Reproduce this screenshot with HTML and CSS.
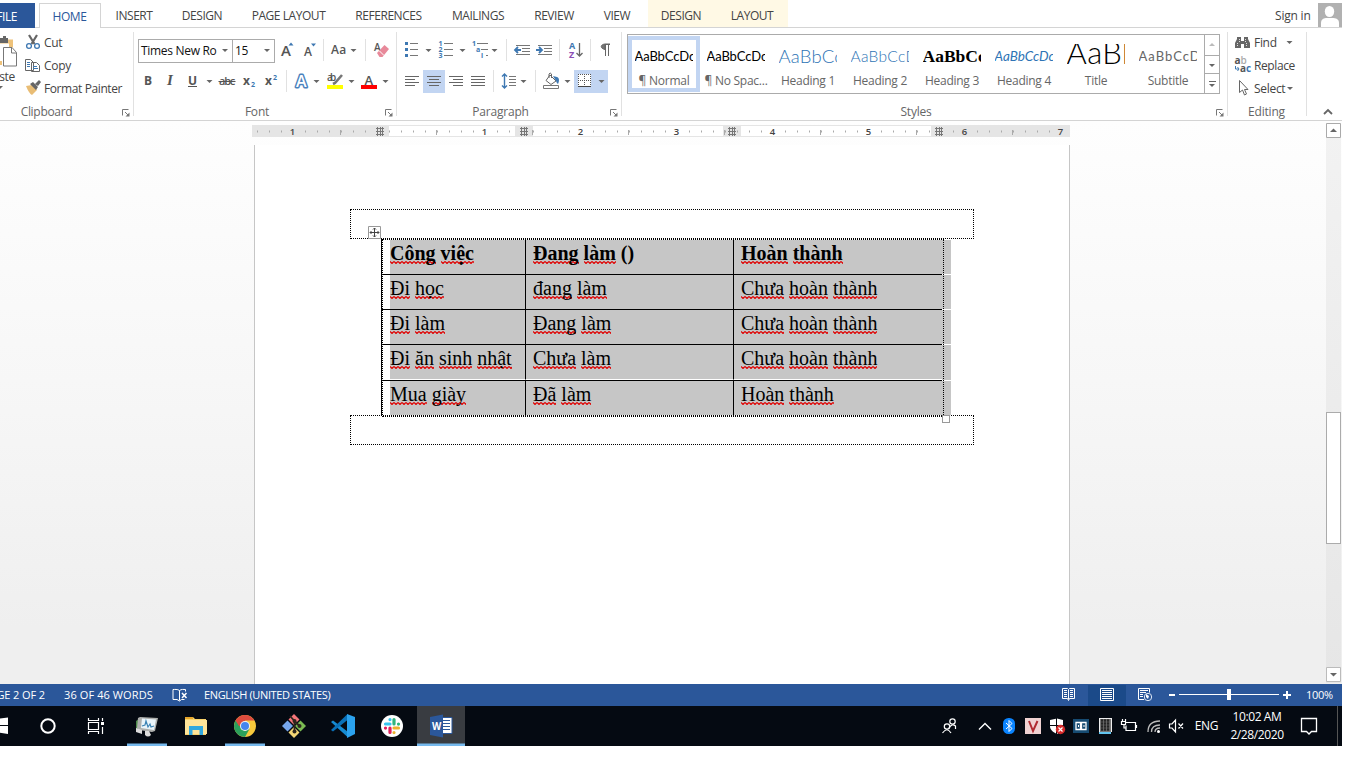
FILE: index.html
```html
<!DOCTYPE html>
<html lang="en">
<head>
<meta charset="utf-8">
<title>Word</title>
<link rel="stylesheet" href="styles.css">
</head>
<body>
<svg class="defs" width="0" height="0">
  <defs>
    <path id="down" d="M0 0h6l-3 3z" fill="#666"/>
    <g id="launch" fill="none" stroke="#777"><path d="M.5 6.5V.5h6M3 3l4 4"/><path d="M7.500 3.500v4h-4z" fill="#777" stroke="none"/></g>
    <g id="hash" stroke="#777"><path d="M0 1.500h8M0 4.500h8M0 7.500h8M1.500 0v9M4.500 0v9M6.500 0v9"/></g>
  </defs>
</svg>
<div class="app">
  <nav class="tabs">
    <span class="tab file">FILE</span>
    <span class="tab home">HOME</span>
    <span class="tab w66">INSERT</span>
    <span class="tab w69">DESIGN</span>
    <span class="tab w104">PAGE LAYOUT</span>
    <span class="tab w96">REFERENCES</span>
    <span class="tab w83">MAILINGS</span>
    <span class="tab w69">REVIEW</span>
    <span class="tab w56">VIEW</span>
    <div class="context"><span class="tab">DESIGN</span><span class="tab">LAYOUT</span></div>
    <span class="signin">Sign in</span>
    <svg class="avatar" width="24" height="24" viewBox="0 0 24 24"><path fill="#b1b1b1" d="M0 0h24v24H0z"/><ellipse cx="11.500" cy="8.500" rx="4.700" ry="5.500" fill="#fff"/><path fill="#fff" d="M3 24v-4c0-4 3-5 6-5h5c4 0 7 1 7 5v4z"/></svg>
  </nav>

  <div class="ribbon">
    <section class="group clipboard">
      <div class="paste">
        <svg width="18" height="34" viewBox="0 34 18 34"><path d="M0 41.500h11v6M0 63h2" fill="none" stroke="#eec27a" stroke-width="4"/><path d="M0 38h3v-2h3v2h2v5H0z" fill="#666"/><path d="M3.500 47.500h8.500l4.500 5v13.500h-13z" fill="#fff" stroke="#777"/><path d="M11.500 47.500v5.500h5" fill="none" stroke="#777"/></svg>
        <span class="paste-label">Paste</span>
        <svg width="18" height="6" viewBox="0 0 18 6"><use href="#down" x="-3" y="1"/></svg>
      </div>
      <div class="cmds">
        <div class="cmd"><svg width="20" height="22" viewBox="24 32 20 22"><path d="M29 35l5.500 9M37 35l-5.500 9" stroke="#666" stroke-width="2.200" fill="none"/><circle cx="29" cy="46" r="2.400" fill="none" stroke="#3e78b2" stroke-width="1.300"/><circle cx="37" cy="46" r="2.400" fill="none" stroke="#3e78b2" stroke-width="1.300"/></svg>Cut</div>
        <div class="cmd"><svg width="20" height="22" viewBox="24 55 20 22"><path d="M25.500 59.500h5l3 3v8h-8zM31.500 62.500h5l3 3v6h-8z" fill="#fff" stroke="#666"/><path d="M27 62.500h3M27 64.500h3M27 66.500h3M33 66.500h4M33 68.500h5" stroke="#3e78b2"/></svg>Copy</div>
        <div class="cmd"><svg width="20" height="22" viewBox="24 78 20 22"><path d="M26 86l6-1 5 5-5 5c-2-1-4-4-6-9z" fill="#e9bd75"/><path d="M30 84l3-2 5 5-2 3zM35 84l4-4 2 2-3 4z" fill="#666"/></svg><span class="tight">Format Painter</span></div>
      </div>
      <div class="label"><span>Clipboard</span><svg width="8" height="8"><use href="#launch"/></svg></div>
    </section>

    <section class="group font">
      <div class="row r1">
        <div class="box">Times New Ro<svg width="6" height="3"><use href="#down"/></svg></div>
        <div class="box">15<svg width="6" height="3"><use href="#down"/></svg></div>
        <svg width="24" height="28" viewBox="275 36 24 28"><text x="281" y="55.500" class="g s15">A</text><path d="M288.500 45.500h5l-2.500-3z" fill="#3e78b2"/></svg>
        <svg width="24" height="28" viewBox="299 36 24 28"><text x="304" y="55.500" class="g s12">A</text><path d="M311 43.500h5l-2.500 3z" fill="#3e78b2"/></svg>
        <i class="sep"></i>
        <svg width="41" height="28" viewBox="324 36 41 28"><text x="331" y="54" class="g s12" textLength="15">Aa</text><use href="#down" x="350.500" y="49"/></svg>
        <i class="sep"></i>
        <svg width="30" height="28" viewBox="366 36 30 28"><text x="374" y="51" class="g s10">A</text><path d="M377 53l7.500-8 4.500 4-6.500 8h-3z" fill="#e8899a"/><path d="M379 50.500l5 5" stroke="#fff"/></svg>
      </div>
      <div class="row r2">
        <svg width="80" height="28" viewBox="137 67 80 28"><text x="144" y="85" class="g b s12">B</text><text x="167" y="85" class="g serif s14">I</text><text x="188" y="84.500" class="g b s12">U</text><path d="M188 86.500h9" stroke="#555"/><use href="#down" x="206.500" y="80"/></svg>
        <svg width="69" height="28" viewBox="217 67 69 28"><text x="219" y="85" class="g s11 semi" textLength="16">abc</text><path d="M218.500 81.500h17" stroke="#555"/><text x="243" y="85" class="g b s12">x</text><text x="251" y="87" class="bl b s7">2</text><text x="265" y="85" class="g b s12">x</text><text x="273" y="80" class="bl b s7">2</text></svg>
        <i class="sep"></i>
        <svg width="34" height="28" viewBox="287 67 34 28"><text x="296" y="86.500" font-size="16" class="outline">A</text><use href="#down" x="313.500" y="80"/></svg>
        <svg width="35" height="28" viewBox="321 67 35 28"><text x="327" y="81" class="g s10 semi" textLength="9">ab</text><path d="M342 75l-7 8-2 1" fill="none" stroke="#777" stroke-width="2.600"/><path d="M327 85h16v4h-16z" fill="#ff0"/><use href="#down" x="348.500" y="80"/></svg>
        <svg width="34" height="28" viewBox="356 67 34 28"><text x="364.500" y="84.500" class="g s13 semi">A</text><path d="M361 85h16v4h-16z" fill="red"/><use href="#down" x="382.500" y="80"/></svg>
      </div>
      <div class="label"><span>Font</span><svg width="8" height="8"><use href="#launch"/></svg></div>
    </section>

    <section class="group para">
      <div class="row r1">
        <svg width="109" height="28" viewBox="397 36 109 28"><path d="M405 42h3v3h-3zM405 48h3v3h-3zM405 54h3v3h-3z" fill="#3e78b2"/><path d="M410 43.500h8M410 49.500h8M410 55.500h8M444 43.500h9M444 49.500h9M444 55.500h9M477 43.500h11M481 49.500h7M486 55.500h2" stroke="#777"/><use href="#down" x="425.500" y="49"/><text x="438.500" y="46" class="bl b s7">1</text><text x="438.500" y="52" class="bl b s7">2</text><text x="438.500" y="58" class="bl b s7">3</text><use href="#down" x="459.500" y="49"/><text x="472" y="46" class="bl b s7">1</text><text x="476" y="52" class="bl b s7">a</text><text x="481" y="58" class="bl b s7">i</text><use href="#down" x="491.500" y="49"/></svg>
        <i class="sep"></i>
        <svg width="52" height="28" viewBox="507 36 52 28"><path d="M516 45.500h14M522 48.500h8M522 51.500h8M516 54.500h14M538 45.500h14M544 48.500h8M544 51.500h8M538 54.500h14" stroke="#777"/><path d="M521 50h-6m3-3l-3 3 3 3M536 50h6m-3-3l3 3-3 3" fill="none" stroke="#3e78b2" stroke-width="1.800"/></svg>
        <i class="sep"></i>
        <svg width="30" height="28" viewBox="560 36 30 28"><text x="569" y="49" class="bl b s9">A</text><text x="569" y="58" class="b s9" fill="#8b4fb5">Z</text><path d="M579.500 43v13m-3-3l3 3 3-3" fill="none" stroke="#666" stroke-width="1.300"/></svg>
        <i class="sep"></i>
        <svg width="29" height="28" viewBox="591 36 29 28"><path d="M610 44.500h-5v5c-5-1-5-5 0-5.500h5M605.500 44v12M608.500 44v12" fill="#777" stroke="#666"/></svg>
      </div>
      <div class="row r2">
        <svg width="96" height="28" viewBox="397 67 96 28"><path d="M423 70h22v23h-22z" fill="#c2d5f2"/><path d="M405 76.500h14M405 79.500h10M405 82.500h14M405 85.500h10M427 76.500h14M429 79.500h10M427 82.500h14M429 85.500h10M449 76.500h14M453 79.500h10M449 82.500h14M453 85.500h10M471 76.500h14M471 79.500h14M471 82.500h14M471 85.500h14" stroke="#666"/></svg>
        <i class="sep"></i>
        <svg width="41" height="28" viewBox="494 67 41 28"><path d="M504.500 74v14m-2.500-11.500l2.500-2.500 2.500 2.500m-5 9l2.500 2.500 2.500-2.500" fill="none" stroke="#3e78b2" stroke-width="1.400"/><path d="M509 76.500h7M509 79.500h7M509 82.500h7M509 85.500h7" stroke="#777"/><use href="#down" x="520.500" y="80"/></svg>
        <i class="sep"></i>
        <svg width="85" height="28" viewBox="536 67 85 28"><path d="M550 75l6 6-5 3.500-5-4zM549 78v-4q1-2 2.500 0v4" fill="#fff" stroke="#666"/><path d="M553 76l4 1c3 1 2 5 1 7q-1 0-2-3z" fill="#3e78b2"/><path d="M543.500 85.500h15v3h-15z" fill="#fff" stroke="#777"/><use href="#down" x="564.500" y="80"/><path d="M574 70h34v23h-34z" fill="#c2d5f2"/><path d="M578 74h13v13h-13z" fill="#fff"/><path d="M578.500 74v12M584.500 74v12M590.500 74v12M578 74.500h13M578 80.500h13" stroke="#555" stroke-dasharray="1 1"/><path d="M578 86.500h13" stroke="#444"/><use href="#down" x="598.500" y="80"/></svg>
      </div>
      <div class="label"><span>Paragraph</span><svg width="8" height="8"><use href="#launch"/></svg></div>
    </section>

    <section class="group styles">
      <div class="gallery">
        <div class="style on"><b class="smp">AaBbCcDc</b><span>¶ Normal</span></div>
        <div class="style"><b class="smp">AaBbCcDc</b><span>¶ No Spac...</span></div>
        <div class="style"><b class="smp h1">AaBbCc</b><span>Heading 1</span></div>
        <div class="style"><b class="smp h2">AaBbCcD</b><span>Heading 2</span></div>
        <div class="style"><b class="smp h3">AaBbCc</b><span>Heading 3</span></div>
        <div class="style"><b class="smp h4">AaBbCcDc</b><span>Heading 4</span></div>
        <div class="style"><b class="smp ti">AaBb</b><span>Title</span></div>
        <div class="style"><b class="smp su">AaBbCcD</b><span>Subtitle</span></div>
        <div class="pager">
          <svg width="14" height="20"><path d="M4 11h6l-3-3z" fill="#bbb"/></svg>
          <svg width="14" height="18"><use href="#down" x="4" y="8"/></svg>
          <svg width="14" height="19"><path d="M4 7.500h7" stroke="#666"/><use href="#down" x="4" y="10"/></svg>
        </div>
      </div>
      <div class="label"><span>Styles</span><svg width="8" height="8"><use href="#launch"/></svg></div>
    </section>

    <section class="group editing">
      <div class="cmds">
        <div class="cmd"><svg width="20" height="22" viewBox="1234 32 20 22"><path d="M1235 48v-5l2-4v-2h4v4h3v-4h4v2l2 4v5h-6v-4h-3v4z" fill="#666"/><path d="M1237.500 43v4M1246.500 43v4M1239.500 39v4M1245.500 39v4" stroke="#ddd" stroke-dasharray="1 1"/></svg>Find<svg width="16" height="3"><use href="#down" x="9.500"/></svg></div>
        <div class="cmd"><svg width="20" height="22" viewBox="1234 55 20 22"><text x="1234.500" y="63.500" class="g b s10">a</text><text x="1240.500" y="63.500" class="s10 semi" fill="#aaa">b</text><text x="1240" y="72" class="g b s10">a</text><text x="1246" y="72" class="bl b s10">c</text><path d="M1235.500 66v3h3m-1-2l1.500 2-1.500 2" fill="none" stroke="#3e78b2"/></svg><span class="tight">Replace</span></div>
        <div class="cmd"><svg width="20" height="22" viewBox="1234 78 20 22"><path d="M1239.500 80.500v12l3-2.500 2 5 2-1-2-4.500h3.500z" fill="#fff" stroke="#666"/></svg>Select<svg width="9" height="3"><use href="#down" x="2"/></svg></div>
      </div>
      <div class="label"><span>Editing</span></div>
    </section>
    <div class="collapse"><svg width="10" height="7"><path d="M1 6l4-4 4 4" fill="none" stroke="#666" stroke-width="1.800"/></svg></div>
  </div>

  <main class="work">
    <div class="sheetcol">
      <svg class="ruler" width="818" height="12" viewBox="252 125 818 12">
        <path d="M252 125h818v12H252z" fill="#e5e5e5"/>
        <path d="M389 126h126v10H389zM533 126h190v10H533zM741 126h190v10H741z" fill="#fff"/>
        <path d="M257 131.500H1058" stroke="#aaa" stroke-width="2" stroke-dasharray="1 11"/>
        <path d="M340.500 130v5M436.500 130v5M532.500 130v5M628.500 130v5M724.500 130v5M820.500 130v5M916.500 130v5M1012.500 130v5" stroke="#aaa"/>
        <path d="M289 126h7v10h-7zM961 126h7v10h-7zM1057 126h7v10h-7z" fill="#e5e5e5"/><path d="M481 126h7v10h-7zM577 126h7v10h-7zM673 126h7v10h-7zM769 126h7v10h-7zM865 126h7v10h-7z" fill="#fff"/>
        <g class="num"><text x="292.500" y="135">1</text><text x="484.500" y="135">1</text><text x="580.500" y="135">2</text><text x="676.500" y="135">3</text><text x="772.500" y="135">4</text><text x="868.500" y="135">5</text><text x="964.500" y="135">6</text><text x="1060.500" y="135">7</text></g>
        <use href="#hash" x="376" y="127"/><use href="#hash" x="520" y="127"/><use href="#hash" x="728" y="127"/><use href="#hash" x="935" y="127"/>
      </svg>
      <article class="page">
        <div class="zone"></div>
        <div class="tablewrap">
          <svg class="move" width="13" height="13"><path d="M.5.5h12v12H.5z" fill="#fff" stroke="#999"/><path d="M6.500 2v9M2 6.500h9M5 3.500l1.500-1.500L8 3.500M5 9.500L6.500 11 8 9.500M3.500 5L2 6.500 3.500 8M9.500 5L11 6.500 9.500 8" fill="none" stroke="#444"/></svg>
          <div class="tr hd"><div><u>Công</u> <u>việc</u></div><div><u>Đang</u> <u>làm</u> ()</div><div><u>Hoàn</u> <u>thành</u></div><i></i></div>
          <div class="tr"><div><u>Đi</u> <u>học</u></div><div><u>đang</u> <u>làm</u></div><div><u>Chưa</u> <u>hoàn</u> <u>thành</u></div><i></i></div>
          <div class="tr"><div><u>Đi</u> <u>làm</u></div><div><u>Đang</u> <u>làm</u></div><div><u>Chưa</u> <u>hoàn</u> <u>thành</u></div><i></i></div>
          <div class="tr tall"><div><u>Đi</u> <u>ăn</u> <u>sinh</u> <u>nhật</u></div><div><u>Chưa</u> <u>làm</u></div><div><u>Chưa</u> <u>hoàn</u> <u>thành</u></div><i></i></div>
          <div class="tr last"><div><u>Mua</u> <u>giày</u></div><div><u>Đã</u> <u>làm</u></div><div><u>Hoàn</u> <u>thành</u></div><i></i></div>
          <span class="handle"></span>
        </div>
        <div class="zone"></div>
      </article>
    </div>
    <div class="scroll">
      <svg width="15" height="15"><path d="M.5.500h14v14H.5z" fill="#fff" stroke="#aaa"/><path d="M4 9h7L7.500 5.500z" fill="#666"/></svg>
      <div class="thumb"></div>
      <svg width="15" height="15"><path d="M.5.500h14v14H.5z" fill="#fff" stroke="#bbb"/><path d="M4 6h7l-3.500 3.500z" fill="#666"/></svg>
    </div>
  </main>

  <footer class="status">
    <span class="pg">PAGE 2 OF 2</span><span class="words">36 OF 46 WORDS</span>
    <svg class="proof" width="16" height="14" viewBox="172 687 16 14"><path d="M179.500 689.500c-2-1.500-5-1-6.500-1v10h4l2.500 1.500 2-1.500h3M179.500 689.500v10M179.500 689.500c2-1.500 4-1 6-1v2" fill="none" stroke="#fff"/><path d="M182 692l4.500 5M186.500 692l-4.500 5" stroke="#fff" stroke-width="1.500"/></svg>
    <span class="lang">ENGLISH (UNITED STATES)</span>
    <svg class="views" width="242" height="22" viewBox="1058 684 242 22"><path d="M1088 685h38v21h-38z" fill="#1b4a89"/><path d="M1062.500 688.500h5l1 1 1-1h5v10h-5l-1 2-1-2h-5zM1068.500 690v9M1064 690.500h3M1064 692.500h3M1064 694.500h3M1064 696.500h3M1070 690.500h3M1070 692.500h3M1070 694.500h3M1070 696.500h3" fill="none" stroke="#fff"/><path d="M1100.500 688.500h13v12h-13zM1102 690.500h10M1102 692.500h10M1102 694.500h10M1102 696.500h10M1102 698.500h10" fill="none" stroke="#fff"/><path d="M1144 699.500h-5.500v-11h11v4M1140 690.500h8M1140 692.500h6M1140 694.500h3M1140 696.500h3" fill="none" stroke="#fff"/><circle cx="1148" cy="697" r="3.700" fill="#2b579a" stroke="#dce6f4"/><path d="M1146 694l3 2-1 3-2-2z" fill="#fff"/><path d="M1169 694h6v2h-6zM1283 694h8v2h-8zM1286 691h2v8h-2zM1227 689h4v11h-4z" fill="#fff"/><path d="M1179 694.500h100" stroke="#fff"/></svg>
    <span class="zoom">100%</span>
  </footer>

  <div class="taskbar">
    <svg width="24" height="40" viewBox="0 706 24 40"><path d="M0 718.500l8-1v7.500H0zM0 726h8v8l-8-1.200z" fill="#fff"/></svg>
    <svg width="48" height="40" viewBox="24 706 48 40"><circle cx="48" cy="726" r="6.700" fill="none" stroke="#fff" stroke-width="2"/></svg>
    <svg width="51" height="40" viewBox="72 706 51 40"><path d="M88.500 718v2.500h10V718M88.500 734v-2.500h10v2.500M88.500 722.500h10v7h-10zM102.500 718v3M102.500 727v7" fill="none" stroke="#fff" stroke-width="1.200"/><path d="M101 722h3v3h-3z" fill="#fff"/></svg>
    <svg width="49" height="40" viewBox="123 706 49 40"><path d="M136 721l3-2v11h-3z" fill="#4d8b4a"/><path d="M138 718l2-1 18 1-3 13-3 1-13-2-2-2z" fill="#aeb0ae"/><path d="M142 718.500l14 1-2 10.500-13-2z" fill="#e9f4fa"/><path d="M142 726l3-1 1-4 2 6 2-3 1 3 3-1" fill="none" stroke="#3a83b5" stroke-width="1.200"/><path d="M136 728l6 2v4l-6-2zM145 731h4l2 4q-3 3-6 0z" fill="#ddd"/><path d="M127 743.500h40v2.500h-40z" fill="#76b9ed"/></svg>
    <svg width="49" height="40" viewBox="172 706 49 40"><path d="M185 717h8l2 2h11v16h-21z" fill="#f9d36b"/><path d="M185 720h22v14h-22z" fill="#ffe59a"/><path d="M185 717h8v2h-8z" fill="#e5a52b"/><path d="M189 726h14v9h-3.500v-5h-7v5H189z" fill="#31a8df"/></svg>
    <svg width="49" height="40" viewBox="221 706 49 40"><circle cx="245" cy="726" r="11" fill="#f7c93c"/><path d="M245 726L235.500 720.500A11 11 0 0 0 245 737l4.500-8z" fill="#2ba05b"/><path d="M235.500 720.500a11 11 0 0 1 19 0H245v5.500h-6z" fill="#dd4b3e"/><circle cx="245" cy="726" r="5" fill="#f4f4f4"/><circle cx="245" cy="726" r="4" fill="#4585ed"/><path d="M225 743.500h40v2.500h-40z" fill="#76b9ed"/></svg>
    <svg width="49" height="40" viewBox="270 706 49 40"><path d="M294 714l5.500 5.500-5.500 5.500-5.500-5.500z" fill="#f4757a"/><path d="M287.500 720.500l5.500 5.500-5.500 5.500-5.500-5.500z" fill="#76a7ed"/><path d="M300.500 720.500l5.500 5.500-5.500 5.500-5.500-5.500z" fill="#7bbb52"/><path d="M294 727l5.500 5.500-5.500 5.500-5.500-5.500z" fill="#f4d675"/><path d="M290 716l4.500 5v11M294.500 721l5 5" fill="none" stroke="#2d261d" stroke-width="1.800"/><circle cx="294.500" cy="721" r="2" fill="#2d261d"/><circle cx="299.500" cy="726" r="2" fill="#2d261d"/><circle cx="294.500" cy="731.500" r="2" fill="#2d261d"/></svg>
    <svg width="49" height="40" viewBox="319 706 49 40"><path d="M331 722l2-1.500 14.500 11V737z" fill="#168bd2"/><path d="M331 730l2 1.500L347.500 720v-6z" fill="#0a71b8"/><path d="M347 714l8 3v17l-8 4z" fill="#2ba2ee"/></svg>
    <svg width="49" height="40" viewBox="368 706 49 40"><circle cx="392" cy="726" r="11" fill="#fff"/><g fill="none" stroke-width="3.200" stroke-linecap="round"><path d="M385.500 724h4.500M390 719.500v.1" stroke="#36c5f0"/><path d="M394 719.500v4.500M398.500 724v.1" stroke="#2eb67d"/><path d="M394 728h4.500M394 732.500v.1" stroke="#ecb22e"/><path d="M390 728v4.500M385.500 728v.1" stroke="#e01e5a"/></g></svg>
    <svg width="48" height="40" viewBox="417 706 48 40"><path d="M417 706h48v40h-48z" fill="#393c41"/><path d="M440 717.500h12v16h-12z" fill="#fff" stroke="#2b579a"/><path d="M443 720.500h7M443 723.500h7M443 726.500h7M443 729.500h7" stroke="#2b579a"/><path d="M430 717l13-2.500v23L430 735z" fill="#2b579a"/><text x="432" y="730" font-size="10" textLength="9" lengthAdjust="spacingAndGlyphs" class="b" fill="#fff">W</text><path d="M417 743.500h48v2.500h-48z" fill="#76b9ed"/></svg>
    <svg class="tray" width="252" height="40" viewBox="937 706 252 40">
      <g fill="none" stroke="#fff" stroke-width="1.200"><circle cx="952.500" cy="721.500" r="2.700"/><path d="M949 728q3-5 6.500-2v3"/><circle cx="947" cy="726.500" r="2.700"/><path d="M942.500 733q4.500-6.500 8.500 0"/><path d="M979 729.500l6-6 6 6" stroke-width="1.400"/></g>
      <rect x="1003" y="718" width="12" height="16" rx="5.500" fill="#0a84ff"/><path d="M1006 723l6 5.500-3 3v-11l3 3-6 5.500" fill="none" stroke="#fff"/>
      <path d="M1025 718h16v16h-16z" fill="#f0d2d2"/><path d="M1029 721l4 10 4.500-10" fill="none" stroke="#b02a30" stroke-width="2"/>
      <path d="M1050 720l7-1.500 6 1.500v6c0 4-3 6-6 8-4-2-7-4-7-8z" fill="#fff"/><path d="M1056.500 718v16M1050 725.500h13" stroke="#05090f"/><circle cx="1060.500" cy="729.500" r="4.700" fill="#d52a2a"/><path d="M1058.500 727.500l4 4m0-4l-4 4" stroke="#fff" stroke-width="1.200"/>
      <path d="M1073 719h16v14h-16z" fill="#164b72"/><path d="M1076 722.500h10v7h-10zM1080.500 723v6.500M1081.500 723v6.500" fill="none" stroke="#fff" stroke-width="1.300"/><path d="M1078 725h1v2h-1zM1083.500 725h1v2h-1z" fill="#fff"/>
      <path d="M1099 718h12v16h-12z" fill="#777"/><path d="M1101 720.500h9M1101 723.500h9M1101 726.500h9M1101 729.500h9" stroke="#252525" stroke-width="2.400" stroke-dasharray="2.300 .7"/><path d="M1099 732h12v2h-12z" fill="#63c5ef"/><path d="M1099.500 718v14M1111.500 718v14M1099 718.500h12" stroke="#eee"/>
      <path d="M1125 722.500h10.500v8H1126v-5M1136.500 725v3M1122.500 719v3M1125.500 719v3M1121.500 721.500h4v3h-4zM1124 725v3h2" fill="none" stroke="#fff" stroke-width="1.200"/>
      <g fill="none" stroke="#bbb" stroke-width="1.300"><path d="M1148 732q0-11 12-11M1151.500 732q0-7 8.500-7M1155 732q0-4 5-4"/></g><circle cx="1158.500" cy="731.500" r="1.500" fill="#fff"/>
      <path d="M1169.500 724h2.500l3.500-4v12l-3.500-4h-2.500zM1178.500 723.500l4.500 5m0-5l-4.500 5" fill="none" stroke="#fff" stroke-width="1.200"/>
    </svg>
    <span class="eng">ENG</span>
    <div class="clock"><span>10:02 AM</span><span>2/28/2020</span></div>
    <svg width="38" height="40" viewBox="1290 706 38 40"><path d="M1301.500 718.500h15v13h-5l-2.500 2.500-2.500-2.500h-5z" fill="none" stroke="#fff" stroke-width="1.300"/></svg>
    <i class="peek"></i>
  </div>
</div>
</body>
</html>
```
FILE: styles.css
```css
* { box-sizing: border-box; }
body { margin: 0; background: #fff; overflow: hidden; font: 12px/16px "Open Sans", "Noto Sans", sans-serif; letter-spacing: -.3px; color: #444; }
svg { display: block; flex: none; overflow: hidden; }
.defs { position: absolute; }
.app { width: 1342px; height: 746px; display: flex; flex-direction: column; overflow: hidden; }

.tabs { height: 28px; flex: none; padding-top: 3px; display: flex; border-bottom: 1px solid #d4d4d4; }
.tab { display: flex; align-items: center; justify-content: center; white-space: nowrap; letter-spacing: -.45px; flex: none; padding: 2px 1px 0 0; }
.file { width: 35px; height: 25px; padding-right: 18px; justify-content: flex-end; background: #2b579a; color: #fff; margin-right: 4px; overflow: hidden; }
.home { width: 62px; height: 25px; background: #fff; border: 1px solid #d4d4d4; border-bottom: 0; color: #2b579a; }
.w56 { width: 57px; } .w66 { width: 67px; } .w69 { width: 69px; } .w83 { width: 83px; } .w96 { width: 96px; } .w104 { width: 104px; }
.context { display: flex; margin: -3px 0 0 2px; padding-top: 3px; width: 140px; background: #fff9e5; }
.context .tab:first-child { width: 67px; } .context .tab:last-child { width: 75px; }
.signin { margin-left: auto; width: 37px; margin-right: 6px; line-height: 25px; white-space: nowrap; letter-spacing: -.2px; }

.ribbon { height: 93px; flex: none; display: flex; border-bottom: 1px solid #d4d4d4; }
.group { position: relative; flex: none; padding-top: 8px; display: flex; flex-direction: column; }
.group::after { content: ""; position: absolute; right: 0; top: 4px; width: 1px; height: 84px; background: #e1e1e1; }
.label { margin-top: auto; height: 16px; display: flex; align-items: center; color: #666; }
.label span { flex: 1; text-align: center; margin-left: -9px; letter-spacing: -.2px; }
.label svg { margin: 1px 4px 0 0; }
.row { display: flex; height: 28px; align-items: center; margin-bottom: 3px; }
.sep { width: 1px; height: 22px; background: #e1e1e1; }
.cmd { display: flex; align-items: center; height: 23px; white-space: nowrap; color: #444; }
.cmds { margin-top: -5px; }
.tight { letter-spacing: -.4px; }

.clipboard { width: 134px; display: grid; grid-template-columns: 24px 1fr; grid-template-rows: 67px 16px; align-content: start; }
.clipboard .label { grid-column: 1 / 3; margin: 1px 0 0; }
.clipboard .label span { margin-left: -29px; padding-left: 0; flex: none; width: 151px; letter-spacing: -.3px; }
.clipboard .label svg { margin-left: 0; }
.paste { margin-top: -2px; }
.paste-label { display: flex; width: 15px; justify-content: flex-end; margin-top: 1px; }

.font { width: 263px; padding-left: 4px; }
.box { display: flex; align-items: center; justify-content: space-between; height: 24px; padding: 0 4px 0 2px; border: 1px solid #ababab; color: #111; white-space: nowrap; margin-top: 1px; }
.r1 .box:first-child { width: 95px; margin-right: -1px; }
.r1 .box:nth-child(2) { width: 43px; }
.font .r2 { margin-left: -1px; }
.g { fill: #555; } .bl { fill: #3e78b2; } .b { font-weight: 700; } .semi { font-weight: 600; }
.s7 { font-size: 7px; } .s9 { font-size: 9px; } .s10 { font-size: 10px; } .s11 { font-size: 11px; } .s12 { font-size: 12px; } .s13 { font-size: 13px; } .s14 { font-size: 15px; } .s15 { font-size: 15px; }
.r1 .g { font-weight: 600; }
.serif { font-family: "Liberation Serif", serif; font-style: italic; font-weight: 700; }
.outline { fill: #fff; stroke: #4b82bd; stroke-width: 3; stroke-linejoin: round; paint-order: stroke; font-weight: 600; }

.para { width: 225px; }
.para .label span { margin-left: -6px; }

.styles { width: 606px; padding: 6px 0 0 5px; }
.styles .label span { margin-left: -11px; }
.gallery { width: 593px; height: 60px; border: 1px solid #ababab; display: flex; }
.style { width: 72px; flex: none; height: 56px; margin-top: 1px; padding: 8px 6px 0; display: flex; flex-direction: column; align-items: center; color: #666; white-space: nowrap; }
.style.on { box-shadow: inset 0 0 0 4px #c2d5f2; }
.style span { letter-spacing: -.25px; line-height: 16px; padding-top: 1px; }
.smp { display: block; width: 58px; margin-right: 1px; height: 28px; line-height: 24px; overflow: hidden; font-weight: 400; color: #000; font-size: 13px; letter-spacing: -.1px; font-family: Lato, sans-serif; flex: none; }
.h1 { color: #2e74b5; font-size: 18.500px; font-weight: 300; letter-spacing: .2px; }
.h2 { color: #2e74b5; font-size: 15.500px; font-weight: 300; letter-spacing: .3px; }
.h3 { font: 700 17.500px/24px "Liberation Serif", serif; letter-spacing: 0; }
.h4 { color: #2e74b5; font-style: italic; font-size: 13.500px; font-weight: 400; letter-spacing: 0; }
.ti { font-size: 31px; line-height: 17px; font-weight: 300; letter-spacing: .4px; }
.su { color: #666; letter-spacing: 1px; font-size: 13px; }
.pager { margin-left: auto; width: 15px; border-left: 1px solid #ababab; }
.pager svg + svg { border-top: 1px solid #ababab; }

.editing { width: 79px; padding-left: 6px; }
.editing .label span { margin-left: -8px; }
.collapse { margin: 80px 0 0 16px; }

.work { flex: 1; min-height: 0; display: flex; justify-content: space-between; background: linear-gradient(#fefefe, #f7f7f7 46%, #efefef 90%); }
.sheetcol { padding: 4px 0 0 252px; }
.num { font-size: 9.500px; fill: #444; text-anchor: middle; font-weight: 600; letter-spacing: 0; }
.page { margin: 8px 0 0 2px; width: 816px; height: 539px; background: #fff; border: 1px solid #c6c6c6; border-width: 0 1px; padding: 64px 95px 0; }
.zone { height: 30px; width: 624px; border: 1px dotted #000; }
.tablewrap { position: relative; width: 571px; height: 176px; margin: 0 0 0 31px; border-left: 1px solid #000; font: 20px/22px "Liberation Serif", "Times New Roman", serif; letter-spacing: 0; color: #000; }
.tablewrap::before { content: ""; position: absolute; left: 0; top: 0; width: 560px; height: 176px; border: 1px dotted #000; }
.tr { display: flex; height: 35px; border-bottom: 1px solid #000; width: 560px; }
.tr.hd { height: 36px; padding-top: 1px; font-weight: 700; }
.tr.tall { height: 36px; }
.tr.last { border-bottom: 0; height: 34px; }
.tr > div { background: #c6c6c6; padding: 2px 0 0 7px; white-space: nowrap; border-right: 1px solid #000; flex: none; }
.tr > div:nth-child(1) { width: 136px; margin-left: 8px; padding-left: 0; }
.tr > div:nth-child(2) { width: 208px; }
.tr > div:nth-child(3) { width: 208px; border-right: 0; }
.tr.tall > div { border-bottom: 1px solid #fff; }
.tr > i { flex: none; width: 9px; background: #c6c6c6; }
u { display: inline-block; height: 24px; text-decoration: none; background: url("data:image/svg+xml,%3Csvg xmlns='http://www.w3.org/2000/svg' width='4' height='3'%3E%3Cpath d='M0 .5L2 2.500L4 .5' fill='none' stroke='%23e00000' stroke-width='1.2'/%3E%3C/svg%3E") repeat-x 0 19px; }
.move { position: absolute; left: -14px; top: -13px; }
.handle { position: absolute; left: 560px; top: 176px; width: 8px; height: 8px; background: #fff; border: 1px solid #999; }

.scroll { width: 15px; margin: 2px 1px 2px 0; height: 560px; display: flex; flex-direction: column; background: linear-gradient(#f2f2f2, #e6e6e6); }
.thumb { height: 132px; margin: 274px 0 123px; background: #fff; border: 1px solid #ababab; flex: none; }

.status { height: 22px; flex: none; background: #2b579a; color: #fff; display: flex; align-items: center; white-space: nowrap; font-size: 11px; }
.pg { width: 45px; display: flex; justify-content: flex-end; overflow: hidden; margin-right: 19px; letter-spacing: -.1px; }
.words { width: 108px; letter-spacing: .1px; }
.lang { margin-left: 16px; letter-spacing: -.35px; }
.views { margin-left: auto; }
.zoom { width: 36px; margin-left: 6px; }

.taskbar { height: 40px; flex: none; background: #050a12; display: flex; align-items: center; color: #fff; }
.tray { margin-left: auto; }
.eng { width: 35px; text-align: center; }
.clock { width: 66px; display: flex; flex-direction: column; align-items: center; line-height: 18px; letter-spacing: -.4px; }
.peek { width: 1px; height: 40px; background: #555; margin: 0 4px 0 9px; }
```
